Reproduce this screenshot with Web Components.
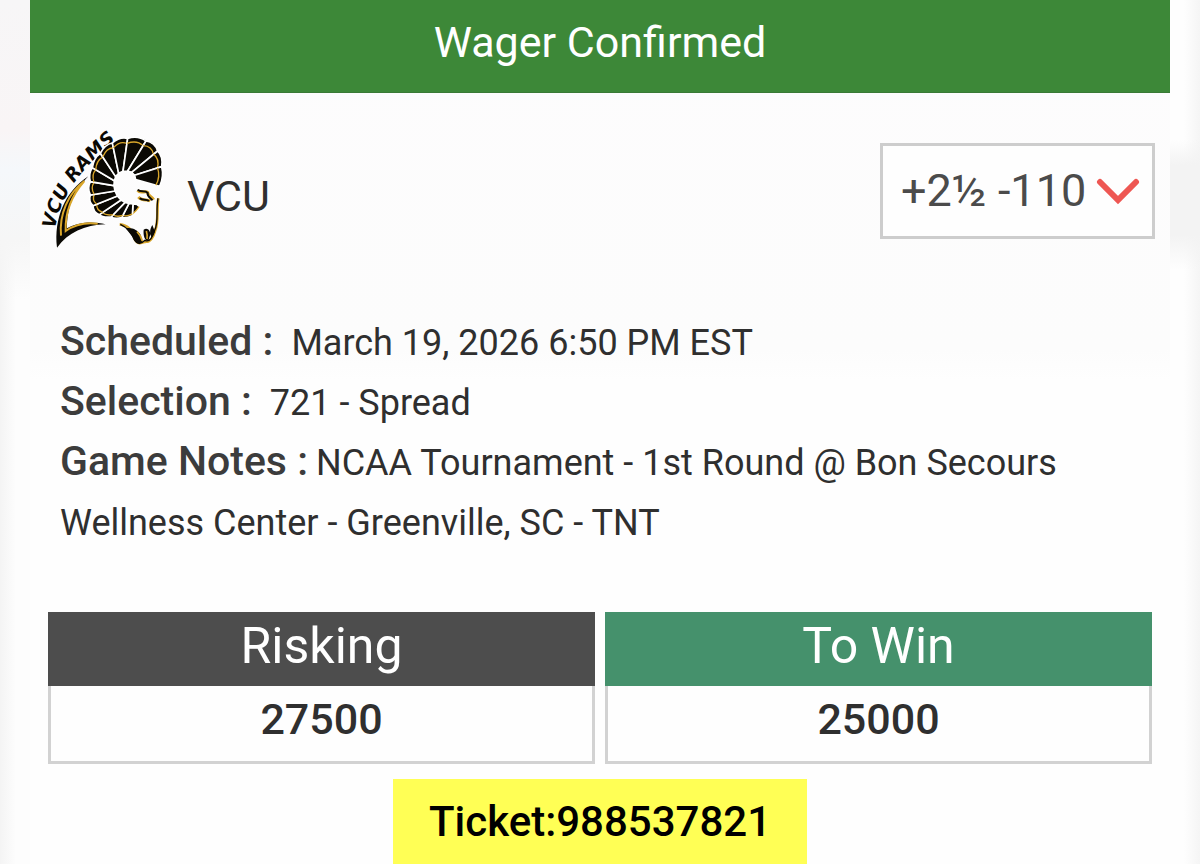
<!DOCTYPE html>
<html lang="en">
<head>
<meta charset="utf-8">
<meta name="viewport" content="width=device-width, initial-scale=1">
<title>Wager Confirmed</title>
<style>
  body {
    margin: 0;
    font-family: Roboto, "Liberation Sans", sans-serif;
    color: #2f2f2f;
    background:
      linear-gradient(#f7f6f7, #f9f5f6 130px, #f5f8fb 170px, #f6f6f6 240px, #f6f6f600 300px) left top / 30px 300px no-repeat,
      linear-gradient(#f3f3f300 140px, #f3f3f3 165px, #f3f3f3 235px, #f3f3f300 270px) right top / 30px 300px no-repeat,
      linear-gradient(to right, #f4f4f4, #fdfdfd 16px, #fefefe calc(100% - 16px), #f5f5f5);
  }
</style>
</head>
<body>
<wager-receipt>
  <team-pick slot="pick" name="VCU">
    <rams-logo slot="logo"></rams-logo>
    <odds-picker slot="odds" value="+2½ -110"></odds-picker>
  </team-pick>
  <wager-detail label="Scheduled :" gap="wide">March 19, 2026 6:50 PM EST</wager-detail>
  <wager-detail label="Selection :" gap="wide">721 - Spread</wager-detail>
  <wager-detail label="Game Notes :">NCAA Tournament - 1st Round @ Bon Secours Wellness Center - Greenville, SC - TNT</wager-detail>
  <amount-box slot="amounts" label="Risking">27500</amount-box>
  <amount-box slot="amounts" label="To Win" tone="win">25000</amount-box>
  <ticket-tag slot="ticket">Ticket:988537821</ticket-tag>
</wager-receipt>

<script>
class WagerReceipt extends HTMLElement {
  constructor() {
    super();
    this.attachShadow({ mode: "open" }).innerHTML = `
      <style>
        :host { display: block; margin: 0 30px; background: linear-gradient(#fdfcfd, #fcfcfc 350px, #fefefe 380px); }
        h1 {
          margin: 0; padding: 17px 0 25px; box-sizing: border-box;
          background: #3d8838; border-bottom: 1px solid #3a7a36;
          color: #fff; text-align: center;
          font-size: 43px; line-height: 50px; font-weight: 400;
        }
        .details { padding: 63px 30px 59px; }
        .amounts { display: grid; grid-template-columns: 1fr 1fr; gap: 10px; padding: 0 18px; }
        .ticket { display: flex; justify-content: center; padding-top: 15px; }
      </style>
      <h1>Wager Confirmed</h1>
      <slot name="pick"></slot>
      <div class="details"><slot></slot></div>
      <div class="amounts"><slot name="amounts"></slot></div>
      <div class="ticket"><slot name="ticket"></slot></div>`;
  }
}
customElements.define("wager-receipt", WagerReceipt);

class TeamPick extends HTMLElement {
  constructor() {
    super();
    this.attachShadow({ mode: "open" }).innerHTML = `
      <style>
        :host { display: flex; align-items: center; padding: 30px 15px 0; }
        h2 { flex: 1; margin: 20px 0 0 22px; font-size: 43px; line-height: 52px; font-weight: 400; }
        .odds { align-self: flex-start; padding-top: 20px; }
      </style>
      <slot name="logo"></slot>
      <h2></h2>
      <div class="odds"><slot name="odds"></slot></div>`;
    this.shadowRoot.querySelector("h2").textContent = this.getAttribute("name");
  }
}
customElements.define("team-pick", TeamPick);

class OddsPicker extends HTMLElement {
  constructor() {
    super();
    this.attachShadow({ mode: "open" }).innerHTML = `
      <style>
        :host { display: grid; align-items: center; width: 275px; }
        select, svg { grid-area: 1 / 1; }
        select {
          appearance: none; width: 100%; height: 96px; margin: 0; box-sizing: border-box;
          padding: 0 60px 2px 18px; border: 3px solid #cdcdcd; border-radius: 0;
          background: #fefefe; color: #4b4b4b; font: inherit; font-size: 45px;
        }
        svg { justify-self: end; width: 44px; height: 28px; margin-right: 15px; pointer-events: none; }
      </style>
      <select aria-label="Line and price"><option></option></select>
      <svg viewBox="0 0 44 28" aria-hidden="true">
        <path d="M4 5 22 23 40 5" fill="none" stroke="#ee5753" stroke-width="6" stroke-linecap="round"/>
      </svg>`;
    this.shadowRoot.querySelector("option").textContent = this.getAttribute("value");
  }
}
customElements.define("odds-picker", OddsPicker);

class WagerDetail extends HTMLElement {
  constructor() {
    super();
    this.attachShadow({ mode: "open" }).innerHTML = `
      <style>
        :host { display: block; font-size: 36px; line-height: 60px; }
        b { font-size: 41px; line-height: 50px; font-weight: 500; color: #3c3c3c; margin-right: 8px; }
        :host([gap="wide"]) b { margin-right: 18px; }
      </style><b></b><slot></slot>`;
    this.shadowRoot.querySelector("b").textContent = this.getAttribute("label");
  }
}
customElements.define("wager-detail", WagerDetail);

class AmountBox extends HTMLElement {
  constructor() {
    super();
    this.attachShadow({ mode: "open" }).innerHTML = `
      <style>
        :host { display: block; text-align: center; }
        h3 {
          margin: 0; padding: 4px 0 10px; background: #4d4d4d; color: #fff;
          font-size: 50px; line-height: 60px; font-weight: 400;
        }
        :host([tone="win"]) h3 { background: #45916c; }
        div {
          padding: 7px 0 15px; border: 3px solid #d2d2d2; border-top: 0; background: #fefefe;
          font-size: 43px; line-height: 53px; font-weight: 500;
        }
      </style>
      <h3></h3><div><slot></slot></div>`;
    this.shadowRoot.querySelector("h3").textContent = this.getAttribute("label");
  }
}
customElements.define("amount-box", AmountBox);

class TicketTag extends HTMLElement {
  constructor() {
    super();
    this.attachShadow({ mode: "open" }).innerHTML = `
      <style>
        :host {
          display: block; padding: 17px 36px 16px; background: #ffff55; color: #000;
          font-size: 42px; line-height: 52px; font-weight: 500;
        }
      </style><slot></slot>`;
  }
}
customElements.define("ticket-tag", TicketTag);

class RamsLogo extends HTMLElement {
  constructor() {
    super();
    // Outer and inner ends of the ridges that divide the horn, clockwise from the jaw.
    const outer = [[326,276],[304,302],[272,308],[240,306],[205,299],[186,272],[178,240],[178,200],[184,158],[208,115],[244,84],[290,70],[345,78],[380,108],[392,155],[386,214]];
    const inner = [[318,268],[306,267],[294,265],[282,262],[270,255],[259,243],[252,228],[249,212],[250,197],[254,185],[263,175],[276,169],[290,168],[302,172],[311,181],[314,194]];
    const mix = (a, b, t) => [a[0] + (b[0] - a[0]) * t, a[1] + (b[1] - a[1]) * t];
    let horn = "";
    for (let i = 0; i < outer.length - 1; i++) {
      const p = outer[i], q = outer[i + 1], m = inner[i], n = inner[i + 1];
      const mid = mix(p, q, 0.5), hub = mix(m, n, 0.5);
      horn += `<path d="M${m} L${p} Q${mix(hub, mid, 1.14)} ${q} L${n}Z" fill="#0b0904" stroke="#fff" stroke-width="5"/>`;
      const a = mix(mix(m, p, 0.9), hub, 0.06), b = mix(mix(n, q, 0.9), hub, 0.06);
      horn += `<path d="M${a} Q${mix(hub, mid, 1)} ${b}" fill="none" stroke="#d9a62a" stroke-width="4"/>`;
    }
    this.attachShadow({ mode: "open" }).innerHTML = `
      <style>
        :host { display: block; width: 120px; }
        svg { display: block; width: 100%; height: auto; overflow: visible; }
        text { font: italic 700 56px "DejaVu Sans", sans-serif; fill: #0b0904; }
      </style>
      <svg viewBox="42 24 360 380" role="img" aria-label="VCU Rams logo">
        <defs><path id="arc" d="M72 342 C86 256 134 168 280 54"/></defs>
        <text><textPath href="#arc">VCU RAMS</textPath></text>
        <path d="M78 398 C68 310 102 230 172 184 C122 236 108 284 108 340 C150 318 190 320 224 328 C160 330 112 352 78 398Z" fill="#0b0904"/>
        <path d="M90 362 C84 298 112 234 160 198 C116 248 102 296 104 348 C132 328 168 322 200 326" fill="none" stroke="#d9a62a" stroke-width="6"/>
        ${horn}
        <path d="M320 226 C328 238 342 226 350 232 C350 244 362 242 368 254 M322 246 C334 260 350 252 358 258" fill="none" stroke="#d9a62a" stroke-width="9"/>
        <path d="M320 224 C328 234 342 224 350 234 C348 246 360 248 364 256 M326 250 C336 258 346 250 354 258" fill="none" stroke="#0b0904" stroke-width="6"/>
        <path d="M266 328 C292 330 306 350 312 374 C322 390 332 384 344 380 C358 382 368 364 372 348 C384 320 376 284 382 250" fill="none" stroke="#d9a62a" stroke-width="8"/>
        <path d="M268 328 C290 338 302 352 310 374 C320 390 332 386 342 376 C356 384 366 364 371 346 C384 320 374 286 381 250" fill="none" stroke="#0b0904" stroke-width="4"/>
        <path d="M284 340 C304 336 320 346 328 358 L334 382 C322 390 310 382 308 370Z M338 344 C350 336 358 348 358 358 L352 378 C342 378 336 362 338 344Z M364 330 L372 350 L362 368 C354 352 358 340 364 330Z" fill="#0b0904"/>
        <path d="M318 350 Q330 362 334 378 M346 348 Q350 360 348 372" fill="none" stroke="#d9a62a" stroke-width="5"/>
      </svg>`;
  }
}
customElements.define("rams-logo", RamsLogo);
</script>
</body>
</html>
